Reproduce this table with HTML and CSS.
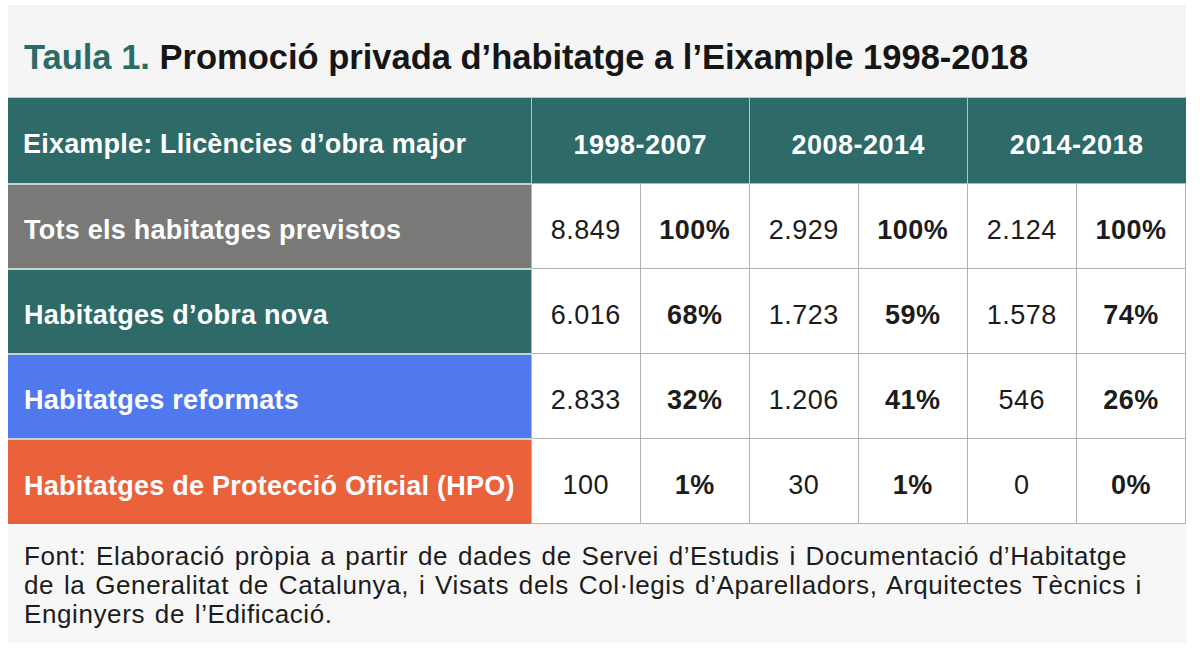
FILE: index.html
```html
<!DOCTYPE html>
<html lang="ca">
<head>
<meta charset="utf-8">
<link rel="stylesheet" href="styles.css">
</head>
<body>
<div class="panel">
  <h1 class="title"><span class="num">Taula 1.</span> Promoció privada d’habitatge a l’Eixample 1998-2018</h1>
  <table class="data">
    <colgroup>
      <col class="c-label">
      <col class="c-val"><col class="c-val"><col class="c-val"><col class="c-val"><col class="c-val"><col class="c-val">
    </colgroup>
    <thead>
      <tr>
        <th class="hlabel">Eixample: Llicències d’obra major</th>
        <th colspan="2">1998-2007</th>
        <th colspan="2">2008-2014</th>
        <th colspan="2">2014-2018</th>
      </tr>
    </thead>
    <tbody>
      <tr>
        <th class="lbl gray">Tots els habitatges previstos</th>
        <td>8.849</td><td class="pct">100%</td>
        <td>2.929</td><td class="pct">100%</td>
        <td>2.124</td><td class="pct">100%</td>
      </tr>
      <tr>
        <th class="lbl teal">Habitatges d’obra nova</th>
        <td>6.016</td><td class="pct">68%</td>
        <td>1.723</td><td class="pct">59%</td>
        <td>1.578</td><td class="pct">74%</td>
      </tr>
      <tr>
        <th class="lbl blue">Habitatges reformats</th>
        <td>2.833</td><td class="pct">32%</td>
        <td>1.206</td><td class="pct">41%</td>
        <td>546</td><td class="pct">26%</td>
      </tr>
      <tr>
        <th class="lbl orange">Habitatges de Protecció Oficial (HPO)</th>
        <td>100</td><td class="pct">1%</td>
        <td>30</td><td class="pct">1%</td>
        <td>0</td><td class="pct">0%</td>
      </tr>
    </tbody>
  </table>
  <p class="source">Font: Elaboració pròpia a partir de dades de Servei d’Estudis i Documentació d’Habitatge de la Generalitat de Catalunya, i Visats dels Col·legis d’Aparelladors, Arquitectes Tècnics i Enginyers de l’Edificació.</p>
</div>
</body>
</html>
```

FILE: styles.css
```css
html, body {
  margin: 0;
  padding: 0;
  background: #ffffff;
}
body {
  padding: 5px 14px 8px 8px;
  font-family: "Liberation Sans", Arial, Helvetica, sans-serif;
  color: #1a1a1a;
}
.panel {
  width: 1178px;
  background: #f5f5f5;
}
.title {
  margin: 0;
  height: 92px;
  box-sizing: border-box;
  padding: 32px 0 0 16px;
  font-size: 34.5px;
  line-height: 40px;
  font-weight: bold;
  color: #161616;
  letter-spacing: 0;
}
.title .num {
  color: #2b6b67;
}
.data {
  width: 1178px;
  border-collapse: collapse;
  table-layout: fixed;
  background: #ffffff;
}
.c-label { width: 523px; }
.c-val { width: 109px; }
.data th, .data td {
  height: 85px;
  box-sizing: border-box;
  padding: 9px 0 0 0;
  font-size: 27px;
  text-align: center;
  vertical-align: middle;
}
.data thead th {
  background: #2e6a67;
  color: #ffffff;
  font-weight: bold;
  height: 86px;
  letter-spacing: 0.5px;
  border-left: 1px solid #9fcfcf;
  border-top: 1px solid #b6c9c8;
}
.data thead th.hlabel {
  text-align: left;
  padding-left: 15px;
  letter-spacing: 0.2px;
  border-left: none;
}
.data td {
  border: 1px solid #b3b3b3;
  color: #1c1c1c;
  letter-spacing: 0.5px;
}
.data td.pct {
  font-weight: bold;
}
.data .lbl {
  text-align: left;
  padding-left: 16px;
  color: #ffffff;
  font-weight: bold;
  letter-spacing: 0.25px;
  border-top: 2px solid #c5d3d3;
}
.lbl.gray { background: #797977; }
.lbl.teal { background: #2e6a67; }
.lbl.blue { background: #5079f0; }
.lbl.orange { background: #e9623b; }
.source {
  margin: 0;
  padding: 18px 31px 14px 16px;
  font-size: 26px;
  line-height: 29px;
  letter-spacing: 0.6px;
  word-spacing: 2px;
  color: #1c1c1c;
  background: #f7f7f7;
}
```
